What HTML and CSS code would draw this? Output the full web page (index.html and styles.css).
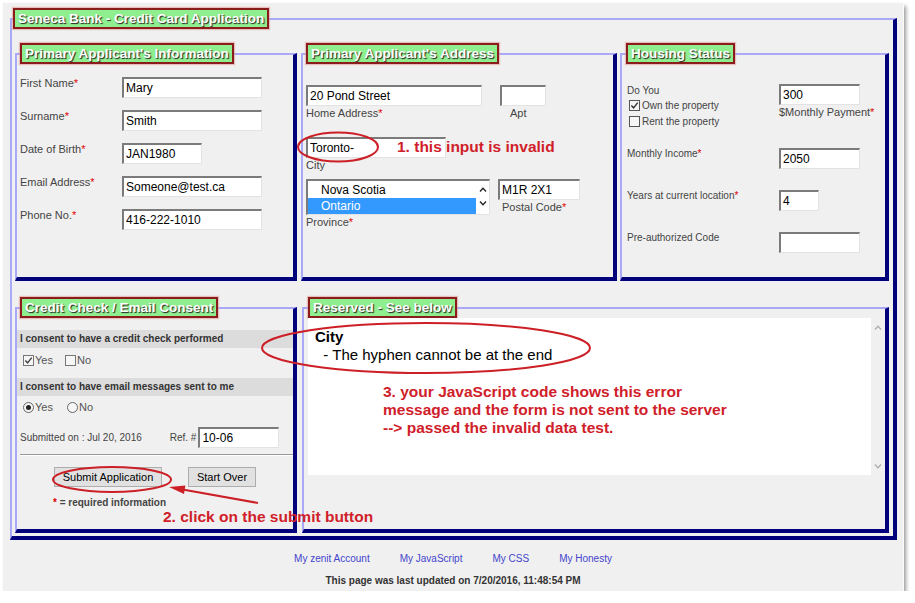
FILE: index.html
```html
<!DOCTYPE html>
<html lang="en">
<head>
<meta charset="utf-8">
<title>Seneca Bank - Credit Card Application</title>
<link rel="stylesheet" href="styles.css">
</head>
<body>
<div class="frame">
  <fieldset class="fs outer">
    <legend class="lg lg-outer">Seneca Bank - Credit Card Application</legend>
    <div class="outer-body">
      <div class="row row1">
        <fieldset class="fs fs-info">
          <legend class="lg">Primary Applicant's Information</legend>
          <div class="fs-body info-body">
            <span class="lbl">First Name<span class="req">*</span></span>
            <input class="inp w140" type="text" value="Mary">
            <span class="lbl">Surname<span class="req">*</span></span>
            <input class="inp w140" type="text" value="Smith">
            <span class="lbl">Date of Birth<span class="req">*</span></span>
            <input class="inp w80" type="text" value="JAN1980">
            <span class="lbl">Email Address<span class="req">*</span></span>
            <input class="inp w140" type="text" value="Someone@test.ca">
            <span class="lbl">Phone No.<span class="req">*</span></span>
            <input class="inp w140" type="text" value="416-222-1010">
          </div>
        </fieldset>
        <fieldset class="fs fs-addr">
          <legend class="lg">Primary Applicant's Address</legend>
          <div class="fs-body addr-body">
            <div class="addr-row">
              <div class="col"><input class="inp w176" type="text" value="20 Pond Street"><span class="lbl sub">Home Address<span class="req">*</span></span></div>
              <div class="col apt"><input class="inp w46" type="text" value=""><span class="lbl sub apt-lbl">Apt</span></div>
            </div>
            <div class="addr-row city-row">
              <div class="col"><input class="inp w140" type="text" value="Toronto-"><span class="lbl sub">City</span></div>
            </div>
            <div class="addr-row prov-row">
              <div class="col">
                <div class="listbox">
                  <div class="opts"><div class="opt">Nova Scotia</div><div class="opt sel">Ontario</div></div>
                  <div class="lb-sb">
                    <svg width="8" height="5" viewBox="0 0 8 5"><path d="M1 4.5 L4 1.2 L7 4.5" fill="none" stroke="#222" stroke-width="1.3"/></svg>
                    <svg width="8" height="5" viewBox="0 0 8 5"><path d="M1 0.5 L4 3.8 L7 0.5" fill="none" stroke="#222" stroke-width="1.3"/></svg>
                  </div>
                </div>
                <span class="lbl sub">Province<span class="req">*</span></span>
              </div>
              <div class="col postal"><input class="inp w82" type="text" value="M1R 2X1"><span class="lbl sub postal-lbl">Postal Code<span class="req">*</span></span></div>
            </div>
          </div>
        </fieldset>
        <fieldset class="fs fs-house">
          <legend class="lg">Housing Status</legend>
          <div class="fs-body house-body">
            <div class="hcell">
              <div class="doyou">Do You</div>
              <div class="chk"><span class="cb"><svg width="9" height="9" viewBox="0 0 10 10"><path d="M1.5 5 L4 7.6 L8.6 1.8" fill="none" stroke="#333" stroke-width="1.6"/></svg></span>Own the property</div>
              <div class="chk"><span class="cb"></span>Rent the property</div>
            </div>
            <div class="col"><input class="inp w81" type="text" value="300"><span class="lbl sub">$Monthly Payment<span class="req">*</span></span></div>
            <span class="lbl sm">Monthly Income<span class="req">*</span></span>
            <input class="inp w81" type="text" value="2050">
            <span class="lbl sm">Years at current location<span class="req">*</span></span>
            <input class="inp w40" type="text" value="4">
            <span class="lbl sm">Pre-authorized Code</span>
            <input class="inp w81" type="text" value="">
          </div>
        </fieldset>
      </div>
      <div class="row row2">
        <fieldset class="fs fs-credit">
          <legend class="lg">Credit Check / Email Consent</legend>
          <div class="fs-body credit-body">
            <div class="band">I consent to have a credit check performed</div>
            <div class="optrow chkrow">
              <span class="cb"><svg width="9" height="9" viewBox="0 0 10 10"><path d="M1.5 5 L4 7.6 L8.6 1.8" fill="none" stroke="#444" stroke-width="1.6"/></svg></span><span>Yes</span>
              <span class="cb no"></span><span>No</span>
            </div>
            <div class="band">I consent to have email messages sent to me</div>
            <div class="optrow radrow">
              <span class="rb on"></span><span>Yes</span>
              <span class="rb no"></span><span>No</span>
            </div>
            <div class="subrow">
              <span>Submitted on : Jul 20, 2016</span>
              <span class="ref">Ref. #</span>
              <input class="inp w81 refinp" type="text" value="10-06">
            </div>
            <div class="hr"></div>
            <div class="btns">
              <button class="btn w108" type="button">Submit Application</button>
              <button class="btn w68" type="button">Start Over</button>
            </div>
            <div class="reqnote"><span class="req">*</span> = required information</div>
          </div>
        </fieldset>
        <fieldset class="fs fs-res">
          <legend class="lg">Reserved - See below</legend>
          <div class="fs-body res-body">
            <div class="ta">
              <div class="ta-text">
                <div class="ta-h">City</div>
                <div class="ta-l">  - The hyphen cannot be at the end</div>
              </div>
              <div class="ta-sb">
                <svg width="8" height="5" viewBox="0 0 8 5"><path d="M1 4.5 L4 1.2 L7 4.5" fill="none" stroke="#aaa" stroke-width="1.2"/></svg>
                <svg width="8" height="5" viewBox="0 0 8 5"><path d="M1 0.5 L4 3.8 L7 0.5" fill="none" stroke="#aaa" stroke-width="1.2"/></svg>
              </div>
            </div>
          </div>
        </fieldset>
      </div>
    </div>
  </fieldset>

  <div class="footer">
    <nav class="links">
      <a href="#">My zenit Account</a>
      <a href="#">My JavaScript</a>
      <a href="#">My CSS</a>
      <a href="#">My Honesty</a>
    </nav>
    <p class="updated">This page was last updated on 7/20/2016, 11:48:54 PM</p>
  </div>

  <svg class="ann-svg" width="900" height="588" viewBox="0 0 900 588">
    <ellipse cx="335" cy="144" rx="40" ry="14.5" fill="none" stroke="#cc1f26" stroke-width="2"/>
    <ellipse cx="423" cy="345" rx="164" ry="25" fill="none" stroke="#cc1f26" stroke-width="2"/>
    <ellipse cx="109" cy="476.5" rx="59" ry="12.5" fill="none" stroke="#cc1f26" stroke-width="2"/>
    <line x1="255" y1="500" x2="181" y2="486.7" stroke="#cc1f26" stroke-width="2"/>
    <polygon points="166,484 182.4,482.6 181,490.9" fill="#cc1f26"/>
  </svg>
  <div class="note n1">1. this input is invalid</div>
  <div class="note n2">2. click on the submit button</div>
  <div class="note n3">3. your JavaScript code shows this error<br>message and the form is not sent to the server<br>--&gt; passed the invalid data test.</div>
</div>
</body>
</html>
```

FILE: styles.css
```css
* { box-sizing: border-box; }
html, body { margin: 0; padding: 0; background: #fff; }
body { font-family: "Liberation Sans", Arial, sans-serif; color: #444; }

.frame {
  position: relative;
  width: 900px;
  height: 588px;
  margin: 3px 0 0 3px;
  padding: 5px 0 0 7px;
  background: #f0f0f0;
  box-shadow: 0 0 0 1px #fbfbfb, 3px 3px 4px rgba(0, 0, 0, 0.4);
}

/* fieldsets */
.fs {
  margin: 0;
  padding: 0;
  min-width: 0;
  border-style: solid;
  border-width: 2px 4px 4px 2px;
  border-color: #a9a9f7 #00007a #00007a #a9a9f7;
}
.outer { width: 887px; }
.lg {
  margin-left: 3px;
  padding: 1px 3px;
  border: 2px solid #8b1c1c;
  background: #8fef8f;
  color: #fff;
  font-weight: bold;
  font-size: 13.5px;
  line-height: 15px;
  text-shadow: 1px 1px 1px #222;
  white-space: nowrap;
  box-shadow: 0 0 1px 1px rgba(230, 140, 140, 0.5);
}
.lg-outer { margin-left: 1px; }
.fs-house > .lg, .fs-res > .lg { margin-left: 4px; }

.outer-body { padding: 14px 4px 3px 3px; }
.row { display: flex; align-items: flex-start; }
.row2 { margin-top: 16px; }
.fs-info { width: 282px; }
.fs-addr { width: 316px; margin-left: 4px; }
.fs-house { width: 269px; margin-left: 3px; }
.fs-credit { width: 282px; }
.fs-res { width: 587px; margin-left: 5px; }
.row1 .fs-body { height: 213px; }
.row2 .fs-body { height: 211px; }

/* labels & inputs */
.lbl { font-size: 11px; line-height: 13px; color: #444; white-space: nowrap; }
.sm { font-size: 10px; line-height: 12px; }
.req { color: #d00; }
.inp {
  display: block;
  margin: 0;
  height: 21px;
  padding: 0 2px;
  border-style: solid;
  border-width: 2px 1px 1px 2px;
  border-color: #7b7b7b #e3e3e3 #e3e3e3 #7b7b7b;
  background: #fff;
  font-family: "Liberation Sans", Arial, sans-serif;
  font-size: 12px;
  color: #000;
  outline: none;
}
.w140 { width: 140px; }
.w80 { width: 80px; }
.w81 { width: 81px; }
.w82 { width: 82px; }
.w176 { width: 176px; }
.w46 { width: 46px; }
.w40 { width: 40px; }

/* info */
.info-body {
  display: grid;
  grid-template-columns: 102px 140px;
  grid-auto-rows: 21px;
  row-gap: 12px;
  align-content: start;
  padding: 13px 0 0 3px;
}

/* address */
.addr-body { padding: 21px 0 0 3px; }
.addr-row { display: flex; align-items: flex-start; }
.col { display: flex; flex-direction: column; align-items: flex-start; }
.col .sub { margin-top: 1px; }
.apt { margin-left: 18px; }
.apt-lbl { margin-left: 10px; }
.city-row { margin-top: 17px; }
.prov-row { margin-top: 7px; }
.postal { margin-left: 8px; }
.postal-lbl { margin-left: 4px; }

.listbox {
  display: flex;
  width: 184px;
  height: 36px;
  border-style: solid;
  border-width: 2px 1px 1px 2px;
  border-color: #7b7b7b #e3e3e3 #e3e3e3 #7b7b7b;
  background: #fff;
}
.opts { flex: 1; padding-top: 1px; }
.opt { height: 16px; line-height: 16px; padding-left: 13px; font-size: 12px; color: #000; }
.opt.sel { background: #3399ff; color: #fff; }
.lb-sb {
  width: 13px;
  display: flex;
  flex-direction: column;
  justify-content: space-between;
  align-items: center;
  padding: 6px 0 8px;
}

/* housing */
.house-body {
  display: grid;
  grid-template-columns: 152px auto;
  grid-template-rows: 43px 21px 21px 21px;
  row-gap: 21px;
  align-items: start;
  padding: 20px 0 0 5px;
}
.doyou { font-size: 10px; line-height: 13px; }
.chk { display: flex; align-items: center; height: 16px; font-size: 10px; }
.cb {
  display: inline-flex;
  align-items: center;
  justify-content: center;
  width: 11px;
  height: 11px;
  border: 1px solid #555;
  background: #f6f6f6;
}
.chk .cb { margin: 0 2px 0 2px; }

/* credit */
.credit-body { padding-top: 12px; }
.band {
  height: 18px;
  line-height: 18px;
  padding-left: 3px;
  background: #dcdcdc;
  font-size: 10px;
  font-weight: bold;
  color: #333;
  white-space: nowrap;
}
.optrow {
  display: flex;
  align-items: center;
  height: 12px;
  padding-left: 6px;
  font-size: 11px;
  line-height: 12px;
  color: #555;
}
.chkrow { margin: 6px 0 12px; }
.radrow { margin: 5px 0 14px; }
.optrow .cb { border-color: #777; margin-right: 1px; }
.cb.no { margin-left: 12px; }
.rb {
  display: inline-flex;
  align-items: center;
  justify-content: center;
  width: 11px;
  height: 11px;
  border: 1px solid #666;
  border-radius: 50%;
  background: #f6f6f6;
  margin-right: 1px;
}
.rb.on::after { content: ""; width: 5px; height: 5px; border-radius: 50%; background: #222; }
.rb.no { margin-left: 14px; }
.subrow {
  display: flex;
  align-items: center;
  height: 21px;
  padding-left: 3px;
  font-size: 10px;
  color: #444;
  white-space: nowrap;
}
.ref { margin-left: 28px; }
.refinp { margin-left: 2px; }
.hr { height: 2px; margin: 6px 0 0 3px; border-top: 1px solid #999; border-bottom: 1px solid #fff; }
.btns { display: flex; justify-content: center; gap: 26px; margin-top: 11px; }
.btn {
  height: 20px;
  padding: 0;
  border: 1px solid #adadad;
  background: #e1e1e1;
  font-family: "Liberation Sans", Arial, sans-serif;
  font-size: 11px;
  color: #000;
}
.w108 { width: 108px; }
.w68 { width: 68px; }
.reqnote { margin-top: 10px; padding-left: 36px; font-size: 10px; line-height: 12px; font-weight: bold; color: #444; }

/* reserved */
.res-body { padding: 0 1px 0 4px; }
.ta { display: flex; height: 157px; }
.ta-text { flex: 1; background: #fff; padding: 10px 7px; color: #000; font-size: 15px; line-height: 18px; }
.ta-h { font-weight: bold; }
.ta-l { white-space: pre; }
.ta-sb {
  width: 13px;
  display: flex;
  flex-direction: column;
  justify-content: space-between;
  align-items: center;
  padding: 7px 0 6px;
}

/* footer */
.footer { margin: 13px 0 0 -7px; text-align: center; }
.links { display: flex; justify-content: center; gap: 30px; font-size: 10px; line-height: 12px; }
.links a { color: #4444cc; text-decoration: none; }
.updated { margin: 10px 0 0; font-size: 10px; line-height: 12px; font-weight: bold; color: #333; }

/* annotations */
.ann-svg { position: absolute; left: 0; top: 0; pointer-events: none; overflow: visible; }
.note {
  position: absolute;
  color: #d0202a;
  font-weight: bold;
  font-size: 15.5px;
  line-height: 18px;
  white-space: nowrap;
}
.n1 { left: 394px; top: 135px; }
.n2 { left: 160px; top: 505px; }
.n3 { left: 380px; top: 380px; }
```
